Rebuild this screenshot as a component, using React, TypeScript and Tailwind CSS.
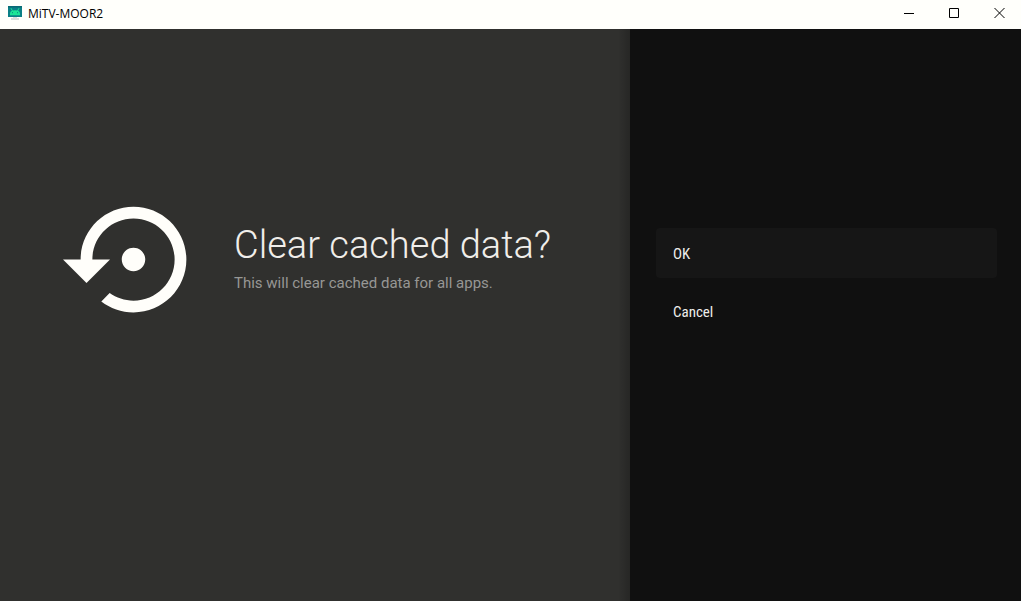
function DeviceIcon() {
  return (
    <svg viewBox="0 0 14 14" className="h-3.5 w-3.5 shrink-0" aria-hidden="true">
      <rect x="0" y="0" width="14" height="11" fill="#0b7f86" />
      <path d="M0 0h14v1.5H0z" fill="#086a74" />
      <path d="M2 9.2V7.4C2 5.4 4.2 4.2 7 4.2s5 1.2 5 3.2v1.8z" fill="#1be596" />
      <path d="M3 2.2l1.6 3M11 2.2L9.4 5.2" stroke="#1be596" strokeWidth="1" />
      <rect x="4" y="6.2" width="1" height="1" fill="#0b7f86" />
      <rect x="9" y="6.2" width="1" height="1" fill="#0b7f86" />
      <path d="M5 11h4v1h2v2H3v-2h2z" fill="#d9dcdb" />
    </svg>
  );
}

function RestoreIcon() {
  return (
    <svg viewBox="0 0 24 24" className="h-[141px] w-[141px] shrink-0" fill="#fffefa" aria-hidden="true">
      <path d="M14 12c0-1.1-.9-2-2-2s-2 .9-2 2 .9 2 2 2 2-.9 2-2zm-2-9c-4.97 0-9 4.03-9 9H0l4 4 4-4H5c0-3.87 3.13-7 7-7s7 3.13 7 7-3.13 7-7 7c-1.51 0-2.91-.49-4.06-1.3l-1.42 1.44C8.04 20.3 9.94 21 12 21c4.97 0 9-4.03 9-9s-4.03-9-9-9z" />
    </svg>
  );
}

const windowControls = [
  { label: "Minimize", path: "M0 5.5h10" },
  { label: "Maximize", path: "M.5.5h9v9h-9z" },
  { label: "Close", path: "M.5 0l10 10M10.5 0l-10 10" },
];

function TitleBar() {
  return (
    <header className="flex h-[29px] shrink-0 items-stretch justify-between bg-[#fffffb] pb-[3px] text-black">
      <div className="flex items-center gap-1.5 pl-2">
        <DeviceIcon />
        <h1 className="pt-0.5 font-['Open_Sans','Noto_Sans',sans-serif] text-xs">MiTV-MOOR2</h1>
      </div>
      <div className="flex">
        {windowControls.map((control) => (
          <button
            key={control.label}
            type="button"
            aria-label={control.label}
            className="flex w-[45px] items-center justify-center"
          >
            <svg viewBox="0 0 10 10" className="h-2.5 w-2.5 overflow-visible" fill="none" stroke="currentColor">
              <path d={control.path} />
            </svg>
          </button>
        ))}
      </div>
    </header>
  );
}

export default function App() {
  return (
    <div className="flex min-h-screen flex-col bg-[#101010] font-['Roboto',sans-serif]">
      <TitleBar />
      <main className="flex flex-1">
        <section className="flex w-[61.7%] items-start bg-[#30302e] pl-[63px] pt-40">
          <RestoreIcon />
          <div className="pl-[30px] pt-8">
            <h2 className="text-[38px] font-light leading-[48px] text-[#f0eeea]">Clear cached data?</h2>
            <p className="mt-1 text-[15px] leading-5 text-[#979795]">This will clear cached data for all apps.</p>
          </div>
        </section>
        <div className="-ml-3 w-3 bg-linear-to-r from-black/0 to-black/20" />
        <section className="flex flex-1 flex-col gap-2 pl-[26px] pr-6 pt-[199px] font-['Roboto_Condensed','Roboto',sans-serif] text-[15px] text-[#eeeeec]">
          <button type="button" className="flex h-[50px] items-center rounded-sm bg-[#161616] px-[17px] pt-[3px]">
            OK
          </button>
          <button type="button" className="flex h-[50px] items-center rounded-sm px-[17px] pt-[3px]">
            Cancel
          </button>
        </section>
      </main>
    </div>
  );
}
